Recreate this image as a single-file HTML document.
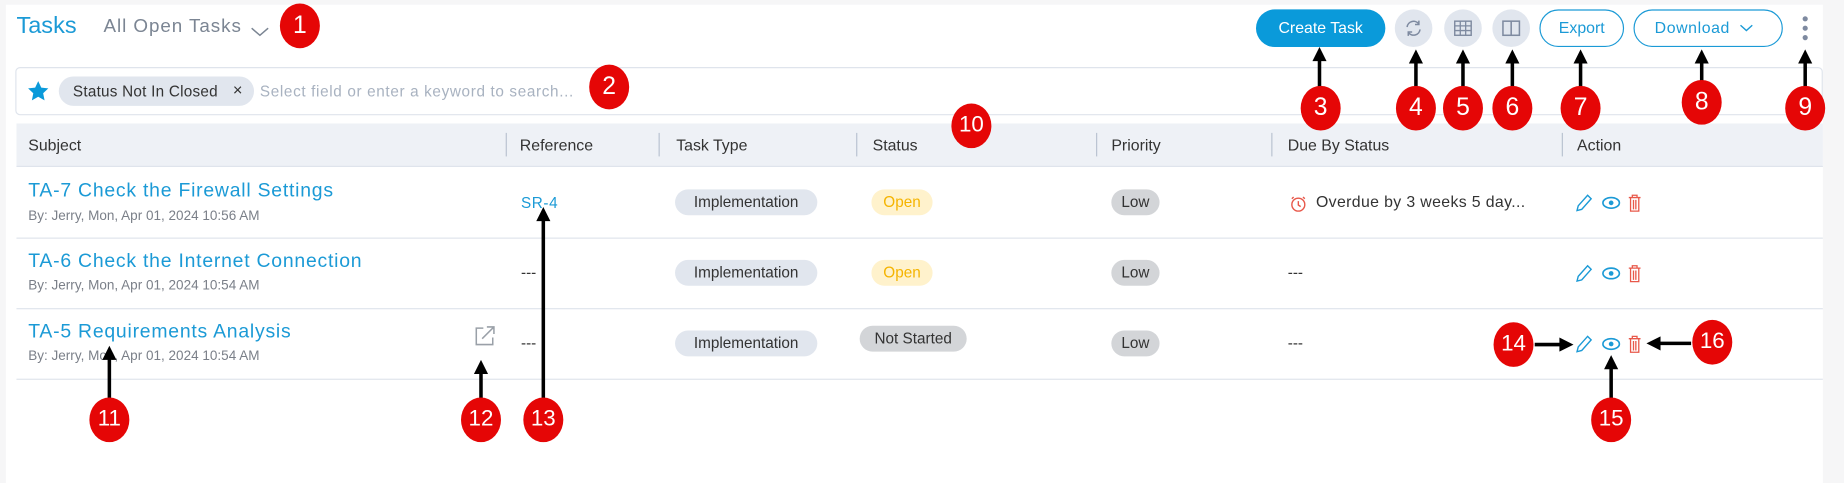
<!DOCTYPE html>
<html><head><meta charset="utf-8"><style>
html,body{margin:0;padding:0;width:1844px;height:483px;overflow:hidden;background:#f6f6f7;font-family:"Liberation Sans",sans-serif}
#w{position:absolute;left:0;top:0;width:1568px;height:411px;transform:scale(1.17602);transform-origin:0 0}
.a{position:absolute}
.panel{position:absolute;left:5px;top:4px;width:1545px;height:407px;background:#fff}
.t{position:absolute;white-space:nowrap}
.pill{position:absolute;height:22px;border-radius:11px;font-size:13px;line-height:22px;text-align:center;color:#333}
.hd{position:absolute;top:105px;left:14px;width:1536px;height:36px;background:#eef1f6;border-bottom:1px solid #dfe4ec}
.hc{position:absolute;top:116px;font-size:13.5px;color:#333}
.sep{position:absolute;top:113px;width:1px;height:20px;background:#b8c2d0}
.rl{position:absolute;left:14px;width:1536px;height:1px;background:#dfe4ec}
.ttl{position:absolute;left:24px;font-size:16.5px;color:#1b9ad6;letter-spacing:0.65px;white-space:nowrap}
.by{position:absolute;left:24px;font-size:11.5px;color:#7a7f88;white-space:nowrap}
.circ{position:absolute;width:32px;height:32px;border-radius:16px;background:#e1e6ee}
.num{position:absolute;width:34px;height:38px;border-radius:50%;background:#e50606;color:#fff;font-size:21px;line-height:38px;text-align:center}
</style></head><body><div id="w">
<div class="panel"></div>
<div class="t" style="left:14px;top:11px;font-size:20px;color:#1b9ad6">Tasks</div>
<div class="t" style="left:88px;top:14px;font-size:16px;color:#7b8593;letter-spacing:0.8px">All Open Tasks</div>
<svg class="a" style="left:213px;top:22px" width="16" height="10"><path d="M1 2l7 6 7-6" fill="none" stroke="#7b8593" stroke-width="1.3"/></svg>

<div class="a" style="left:1068px;top:8px;width:110px;height:32px;border-radius:16px;background:#0a9ada;color:#fff;font-size:13.5px;line-height:32px;text-align:center">Create Task</div>
<div class="circ" style="left:1186px;top:8px"></div>
<svg class="a" style="left:1194px;top:16px" width="16" height="16"><path d="M2.5 7A5.5 5.5 0 0 1 12.5 4.5M13.5 9A5.5 5.5 0 0 1 3.5 11.5" fill="none" stroke="#7e8aa0" stroke-width="1.3"/><path d="M12.5 1.5v3.3h-3.3M3.5 14.5v-3.3h3.3" fill="none" stroke="#7e8aa0" stroke-width="1.3"/></svg>
<div class="circ" style="left:1228px;top:8px"></div>
<svg class="a" style="left:1236px;top:17px" width="16" height="14"><rect x="1" y="1" width="14" height="12" fill="none" stroke="#7e8aa0" stroke-width="1.2"/><path d="M1 5h14M1 9h14M5.7 1v12M10.3 1v12" stroke="#7e8aa0" stroke-width="1.1"/></svg>
<div class="circ" style="left:1269px;top:8px"></div>
<svg class="a" style="left:1277px;top:17px" width="16" height="14"><rect x="1" y="1" width="14" height="12" fill="none" stroke="#7e8aa0" stroke-width="1.3"/><path d="M8 1v12" stroke="#7e8aa0" stroke-width="1.3"/></svg>
<div class="a" style="left:1309px;top:8px;width:70px;height:30px;border:1px solid #1b9ad6;border-radius:16px;color:#1b9ad6;font-size:13.5px;line-height:30px;text-align:center">Export</div>
<div class="a" style="left:1389px;top:8px;width:125px;height:30px;border:1px solid #1b9ad6;border-radius:16px;color:#1b9ad6;font-size:13.5px;line-height:30px"><span style="margin-left:17px;letter-spacing:0.5px">Download</span></div>
<svg class="a" style="left:1479px;top:20px" width="12" height="8"><path d="M1 1.5l5 4.5 5-4.5" fill="none" stroke="#1b9ad6" stroke-width="1.2"/></svg>
<svg class="a" style="left:1530px;top:12px" width="10" height="26"><circle cx="5" cy="4" r="2.2" fill="#7e8aa0"/><circle cx="5" cy="12" r="2.2" fill="#7e8aa0"/><circle cx="5" cy="20" r="2.2" fill="#7e8aa0"/></svg>

<div class="a" style="left:13px;top:57px;width:1535px;height:39px;border:1px solid #dfe4ec;border-radius:4px;background:#fff"></div>
<svg class="a" style="left:23px;top:68px" width="19" height="18"><path d="M9.5 1l2.6 5.5 6 .7-4.4 4.1 1.2 6L9.5 14.3 4.1 17.3l1.2-6L.9 7.2l6-.7z" fill="#0a9ada"/></svg>
<div class="a" style="left:50px;top:65px;width:166px;height:25px;border-radius:13px;background:#e1e6ee"></div>
<div class="t" style="left:62px;top:70px;font-size:13px;color:#333;letter-spacing:0.2px">Status Not In Closed</div>
<div class="t" style="left:198px;top:68px;font-size:14px;color:#333">×</div>
<div class="t" style="left:221px;top:70px;font-size:13px;color:#a8b2c0;letter-spacing:0.55px">Select field or enter a keyword to search...</div>

<div class="hd"></div>
<div class="hc" style="left:24px">Subject</div>
<div class="sep" style="left:430px"></div><div class="hc" style="left:442px">Reference</div>
<div class="sep" style="left:560px"></div><div class="hc" style="left:575px">Task Type</div>
<div class="sep" style="left:728px"></div><div class="hc" style="left:742px">Status</div>
<div class="sep" style="left:932px"></div><div class="hc" style="left:945px">Priority</div>
<div class="sep" style="left:1081px"></div><div class="hc" style="left:1095px">Due By Status</div>
<div class="sep" style="left:1328px"></div><div class="hc" style="left:1341px">Action</div>

<div class="rl" style="top:202px"></div><div class="rl" style="top:262px"></div><div class="rl" style="top:322px"></div>

<div class="ttl" style="top:153px">TA-7 Check the Firewall Settings</div>
<div class="by" style="top:178px">By: Jerry, Mon, Apr 01, 2024 10:56 AM</div>
<div class="ttl" style="top:213px">TA-6 Check the Internet Connection</div>
<div class="by" style="top:237px">By: Jerry, Mon, Apr 01, 2024 10:54 AM</div>
<div class="ttl" style="top:273px">TA-5 Requirements Analysis</div>
<div class="by" style="top:297px">By: Jerry, Mon, Apr 01, 2024 10:54 AM</div>
<svg class="a" style="left:402px;top:276px" width="20" height="20"><path d="M9 3H3v14h14v-6" fill="none" stroke="#9aa0a8" stroke-width="1.3"/><path d="M8 12L18 2M12 2h6v6" fill="none" stroke="#9aa0a8" stroke-width="1.3"/></svg>

<div class="t" style="left:443px;top:165px;font-size:13px;color:#1b9ad6;letter-spacing:0.5px">SR-4</div>
<div class="t" style="left:443px;top:224px;font-size:13px;color:#333">---</div>
<div class="t" style="left:443px;top:284px;font-size:13px;color:#333">---</div>

<div class="pill" style="left:574px;top:161px;width:121px;background:#e1e6ee">Implementation</div>
<div class="pill" style="left:574px;top:221px;width:121px;background:#e1e6ee">Implementation</div>
<div class="pill" style="left:574px;top:281px;width:121px;background:#e1e6ee">Implementation</div>
<div class="pill" style="left:741px;top:161px;width:52px;background:#fff2cc;color:#f5b400">Open</div>
<div class="pill" style="left:741px;top:221px;width:52px;background:#fff2cc;color:#f5b400">Open</div>
<div class="pill" style="left:731px;top:277px;width:91px;background:#d3d5d8">Not Started</div>
<div class="pill" style="left:945px;top:161px;width:41px;background:#d3d5d8">Low</div>
<div class="pill" style="left:945px;top:221px;width:41px;background:#d3d5d8">Low</div>
<div class="pill" style="left:945px;top:281px;width:41px;background:#d3d5d8">Low</div>

<svg class="a" style="left:1097px;top:165px" width="14" height="16"><circle cx="7" cy="9" r="5.5" fill="none" stroke="#e8584a" stroke-width="1.2"/><path d="M7 6v3.3l2 1.4M3 2.5l-1.5 1.5M11 2.5l1.5 1.5" fill="none" stroke="#e8584a" stroke-width="1.2"/></svg>
<div class="t" style="left:1119px;top:164px;font-size:13.5px;color:#333;letter-spacing:0.3px">Overdue by 3 weeks 5 day...</div>
<div class="t" style="left:1095px;top:224px;font-size:13px;color:#333">---</div>
<div class="t" style="left:1095px;top:284px;font-size:13px;color:#333">---</div>

<svg class="a" style="left:1338px;top:163px" width="60" height="20"><path d="M3 16l1-4 8-9 3 3-8 9z" fill="none" stroke="#1b9ad6" stroke-width="1.2"/><ellipse cx="32" cy="9.5" rx="7" ry="4.5" fill="none" stroke="#1b9ad6" stroke-width="1.4"/><circle cx="32" cy="9.5" r="2" fill="#1b9ad6"/><path d="M47 5h10M50 5V3h4v2M48.5 5.5v11h7v-11M51 7v8M53 7v8" fill="none" stroke="#e8584a" stroke-width="1.1"/></svg>
<svg class="a" style="left:1338px;top:223px" width="60" height="20"><path d="M3 16l1-4 8-9 3 3-8 9z" fill="none" stroke="#1b9ad6" stroke-width="1.2"/><ellipse cx="32" cy="9.5" rx="7" ry="4.5" fill="none" stroke="#1b9ad6" stroke-width="1.4"/><circle cx="32" cy="9.5" r="2" fill="#1b9ad6"/><path d="M47 5h10M50 5V3h4v2M48.5 5.5v11h7v-11M51 7v8M53 7v8" fill="none" stroke="#e8584a" stroke-width="1.1"/></svg>
<svg class="a" style="left:1338px;top:283px" width="60" height="20"><path d="M3 16l1-4 8-9 3 3-8 9z" fill="none" stroke="#1b9ad6" stroke-width="1.2"/><ellipse cx="32" cy="9.5" rx="7" ry="4.5" fill="none" stroke="#1b9ad6" stroke-width="1.4"/><circle cx="32" cy="9.5" r="2" fill="#1b9ad6"/><path d="M47 5h10M50 5V3h4v2M48.5 5.5v11h7v-11M51 7v8M53 7v8" fill="none" stroke="#e8584a" stroke-width="1.1"/></svg>

<svg class="a" style="left:0;top:0" width="1568" height="411">
<g stroke="#000" stroke-width="3" fill="none">
<path d="M1122 76V50M1204 76V52M1244 76V52M1286 76V52M1344 76V52M1447 72V52M1535 76V52M93 340V304M409 340V316M462 340V186M1370 340V312M1305 293H1328M1438 292H1410"/>
</g>
<g fill="#000">
<path d="M1116 52l6-12 6 12zM1198 54l6-12 6 12zM1238 54l6-12 6 12zM1280 54l6-12 6 12zM1338 54l6-12 6 12zM1441 54l6-12 6 12zM1529 54l6-12 6 12zM87 306l6-12 6 12zM403 318l6-12 6 12zM456 188l6-12 6 12zM1364 314l6-12 6 12zM1326 287l12 6-12 6zM1412 286l-12 6 12 6z"/>
</g></svg>

<div class="num" style="left:238px;top:3px">1</div>
<div class="num" style="left:501px;top:55px">2</div>
<div class="num" style="left:1106px;top:73px">3</div>
<div class="num" style="left:1187px;top:73px">4</div>
<div class="num" style="left:1227px;top:73px">5</div>
<div class="num" style="left:1269px;top:73px">6</div>
<div class="num" style="left:1327px;top:73px">7</div>
<div class="num" style="left:1430px;top:68px">8</div>
<div class="num" style="left:1518px;top:73px">9</div>
<div class="num" style="left:809px;top:88px;font-size:19px">10</div>
<div class="num" style="left:76px;top:338px;font-size:19px">11</div>
<div class="num" style="left:392px;top:338px;font-size:19px">12</div>
<div class="num" style="left:445px;top:338px;font-size:19px">13</div>
<div class="num" style="left:1270px;top:274px;font-size:19px">14</div>
<div class="num" style="left:1353px;top:338px;font-size:19px">15</div>
<div class="num" style="left:1439px;top:272px;font-size:19px">16</div>
</div></body></html>
